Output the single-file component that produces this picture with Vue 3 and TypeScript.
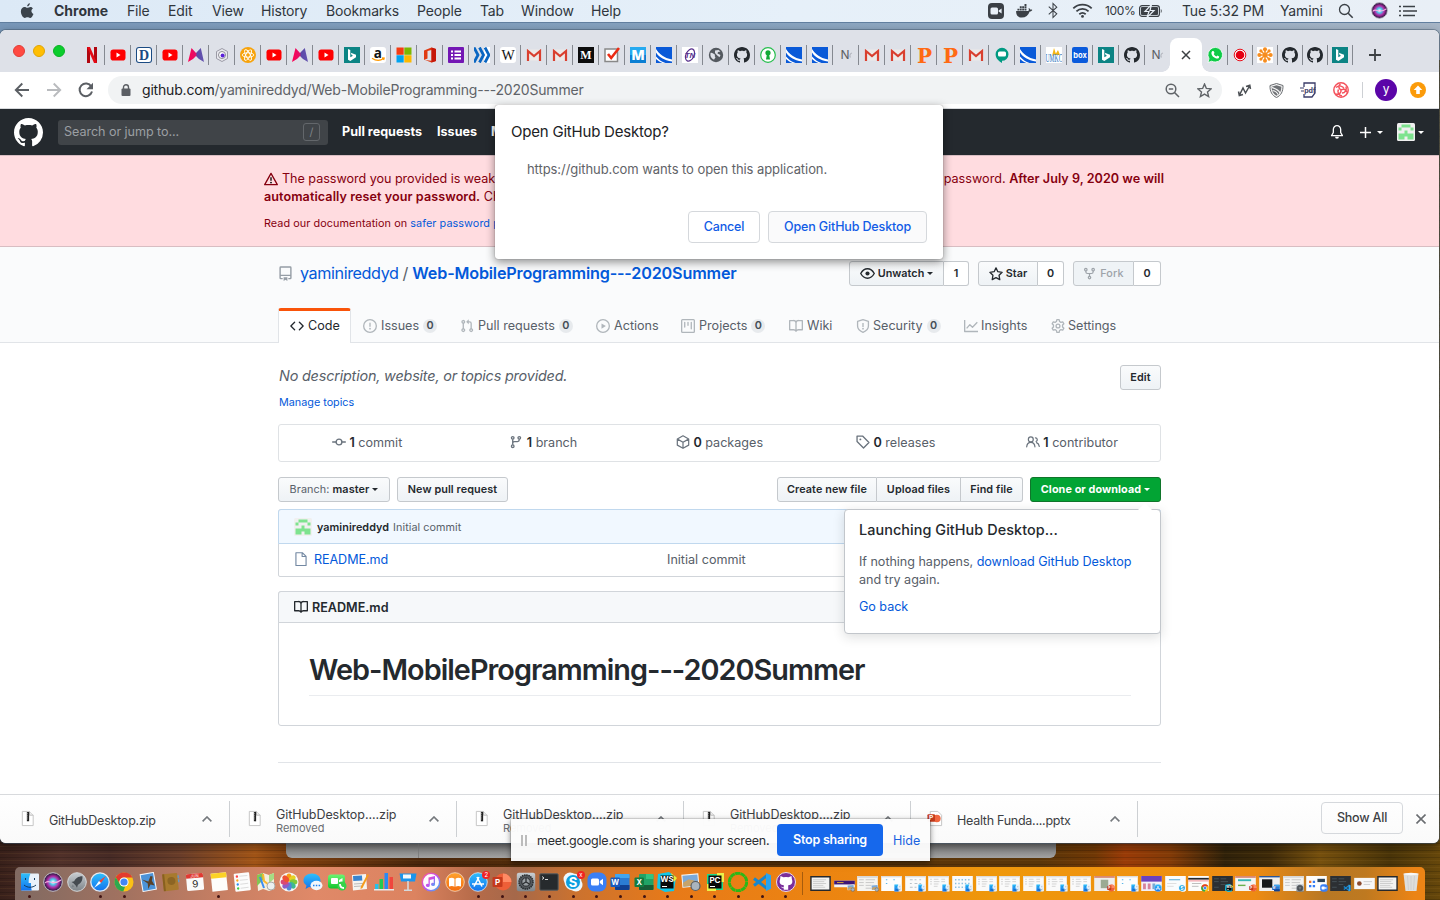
<script setup lang="ts">
const menus = ['Chrome', 'File', 'Edit', 'View', 'History', 'Bookmarks', 'People', 'Tab', 'Window', 'Help']

const leftTabs = [
  'netflix', 'yt', 'dict', 'yt', 'mural', 'hex', 'atom', 'yt', 'mural', 'yt', 'bing', 'amazon', 'ms', 'office',
  'forms', 'waves', 'wiki', 'gmail', 'gmail', 'medium', 'check', 'mblue', 'swoosh', 'tn', 'globe', 'gh', 'key',
  'swoosh', 'swoosh', 'nc', 'gmail', 'gmail', 'pp', 'pp', 'gmail', 'meet', 'swoosh', 'umkc', 'box', 'bing', 'gh', 'nc',
]
const rightTabs = ['whatsapp', 'record', 'flower', 'gh', 'gh', 'bing']

interface NavTab { id: string; icon: string; label: string; count?: number }
const navTabs: NavTab[] = [
  { id: 'code', icon: 'o-code', label: 'Code' },
  { id: 'issues', icon: 'o-issue', label: 'Issues', count: 0 },
  { id: 'pulls', icon: 'o-pr', label: 'Pull requests', count: 0 },
  { id: 'runs', icon: 'o-play', label: 'Actions' },
  { id: 'projects', icon: 'o-project', label: 'Projects', count: 0 },
  { id: 'wiki', icon: 'o-book', label: 'Wiki' },
  { id: 'security', icon: 'o-shield', label: 'Security', count: 0 },
  { id: 'insights', icon: 'o-graph', label: 'Insights' },
  { id: 'settings', icon: 'o-gear', label: 'Settings' },
]

const stats = [
  { icon: 'o-commit', n: 1, label: 'commit' },
  { icon: 'o-branch', n: 1, label: 'branch' },
  { icon: 'o-package', n: 0, label: 'packages' },
  { icon: 'o-tag', n: 0, label: 'releases' },
  { icon: 'o-people', n: 1, label: 'contributor' },
]

const downloads = [
  { icon: 'zip', name: 'GitHubDesktop.zip', note: '' },
  { icon: 'zip', name: 'GitHubDesktop....zip', note: 'Removed' },
  { icon: 'zip', name: 'GitHubDesktop....zip', note: 'Removed' },
  { icon: 'zip', name: 'GitHubDesktop....zip', note: 'Removed' },
  { icon: 'ppt', name: 'Health Funda....pptx', note: '' },
]

const apps = [
  'finder', 'siri', 'rocket', 'safari', 'chrome', 'mail', 'contacts', 'cal', 'notes', 'remind', 'maps', 'photos',
  'msg', 'facetime', 'pages', 'numbers', 'keynote', 'music', 'books', 'appstore', 'powerpoint', 'prefs', 'term',
  'skype', 'zoom', 'word', 'excel', 'ws', 'preview', 'pc', 'conda', 'vscode', 'ghd',
]
const running = new Set([
  'finder', 'safari', 'chrome', 'notes', 'appstore', 'powerpoint', 'prefs', 'term', 'skype', 'zoom', 'word', 'excel',
  'ws', 'preview', 'pc', 'conda', 'vscode', 'ghd',
])

interface Mini { body: string; badge: string }
const minis: Mini[] = [
  { body: 'm-frame', badge: '' }, { body: 'm-banner', badge: 'preview' }, { body: 'm-doc', badge: 'preview' },
  { body: 'm-few', badge: 'finder' }, { body: 'm-grid', badge: 'finder' }, { body: 'm-list', badge: 'finder' },
  { body: 'm-dots', badge: 'finder' }, { body: 'm-list', badge: 'finder' }, { body: 'm-list', badge: 'finder' },
  { body: 'm-list', badge: 'finder' }, { body: 'm-list', badge: 'finder' }, { body: 'm-list', badge: 'finder' },
  { body: 'm-photo', badge: 'powerpoint' }, { body: 'm-few', badge: 'finder' }, { body: 'm-store', badge: 'appstore' },
  { body: 'm-text', badge: 'skype' }, { body: 'm-web', badge: 'chrome' }, { body: 'm-dark', badge: 'ws' },
  { body: 'm-slides', badge: 'powerpoint' }, { body: 'm-black', badge: 'word' }, { body: 'm-doc', badge: 'prefs' },
  { body: 'm-zoom', badge: 'zoom' }, { body: 'm-dark', badge: 'vscode' }, { body: 'm-pic', badge: '' },
  { body: 'm-frame', badge: '' },
]
</script>

<template>
  <div class="desktop">
    <svg class="defs" width="0" height="0">
      <defs>
        <linearGradient id="gBlue" x1="0" y1="0" x2="0" y2="1"><stop offset="0" stop-color="#2fc0fb" /><stop offset="1" stop-color="#1372ee" /></linearGradient>
        <linearGradient id="gGrey" x1="0" y1="0" x2="0" y2="1"><stop offset="0" stop-color="#c9ced2" /><stop offset="1" stop-color="#7c8388" /></linearGradient>
        <linearGradient id="gGreen" x1="0" y1="0" x2="0" y2="1"><stop offset="0" stop-color="#6cf573" /><stop offset="1" stop-color="#12c52c" /></linearGradient>
        <linearGradient id="gOrange" x1="0" y1="0" x2="0" y2="1"><stop offset="0" stop-color="#ffa32e" /><stop offset="1" stop-color="#f56b0c" /></linearGradient>
        <linearGradient id="gMusic" x1="0" y1="0" x2="1" y2="1"><stop offset="0" stop-color="#fb5b89" /><stop offset=".5" stop-color="#c44df0" /><stop offset="1" stop-color="#36b6f5" /></linearGradient>
        <linearGradient id="gMural" x1="0" y1="0" x2="1" y2="0"><stop offset="0" stop-color="#ff0050" /><stop offset=".5" stop-color="#e0106b" /><stop offset=".55" stop-color="#5b4aa8" /><stop offset="1" stop-color="#6554b0" /></linearGradient>
        <radialGradient id="gSiri"><stop offset="0" stop-color="#fff" /><stop offset=".3" stop-color="#4dc9e8" /><stop offset=".6" stop-color="#b02ca8" /><stop offset="1" stop-color="#17142f" /></radialGradient>
      </defs>
    </svg>
    <svg class="sprites" width="0" height="0">
      <!-- GitHub glyphs, 16 unit grid -->
      <symbol id="gh" viewBox="0 0 16 16"><path d="M8 0C3.58 0 0 3.58 0 8c0 3.54 2.29 6.53 5.47 7.59.4.07.55-.17.55-.38 0-.19-.01-.82-.01-1.49-2.01.37-2.53-.49-2.69-.94-.09-.23-.48-.94-.82-1.13-.28-.15-.68-.52-.01-.53.63-.01 1.08.58 1.23.82.72 1.21 1.87.87 2.33.66.07-.52.28-.87.51-1.07-1.78-.2-3.64-.89-3.64-3.95 0-.87.31-1.59.82-2.15-.08-.2-.36-1.02.08-2.12 0 0 .67-.21 2.2.82.64-.18 1.32-.27 2-.27.68 0 1.36.09 2 .27 1.53-1.04 2.2-.82 2.2-.82.44 1.1.16 1.92.08 2.12.51.56.82 1.27.82 2.15 0 3.07-1.87 3.75-3.65 3.95.29.25.54.73.54 1.48 0 1.07-.01 1.93-.01 2.2 0 .21.15.46.55.38A8.013 8.013 0 0016 8c0-4.42-3.58-8-8-8z" /></symbol>
      <symbol id="o-repo" viewBox="0 0 16 16"><path fill-rule="evenodd" d="M1.500 1.750A1.500 1.500 0 013 .25h10a1.500 1.500 0 011.500 1.500v11a1.500 1.500 0 01-1.500 1.500h-2v-1.500h2v-2H3v2h2v1.500H3a1.500 1.500 0 01-1.500-1.500zM3 1.750v7.500h10v-7.500zM6 12h4v3.900l-2-1.300-2 1.300z" /></symbol>
      <symbol id="o-code" viewBox="0 0 16 16"><path d="M4.720 3.220a.75.75 0 011.060 1.060L2.060 8l3.720 3.720a.75.75 0 11-1.060 1.060L.47 8.530a.75.75 0 010-1.060l4.250-4.250zm6.560 0a.75.75 0 10-1.060 1.060L13.940 8l-3.720 3.720a.75.75 0 101.060 1.060l4.250-4.250a.75.75 0 000-1.060l-4.250-4.250z" /></symbol>
      <symbol id="o-issue" viewBox="0 0 16 16"><path fill-rule="evenodd" d="M8 1.500a6.500 6.500 0 100 13 6.500 6.500 0 000-13zM0 8a8 8 0 1116 0A8 8 0 010 8zm9 3a1 1 0 11-2 0 1 1 0 012 0zm-.25-6.250a.75.75 0 00-1.500 0v3.500a.75.75 0 001.500 0v-3.500z" /></symbol>
      <symbol id="o-pr" viewBox="0 0 16 16"><path fill-rule="evenodd" d="M7.177 3.073L9.573.677A.25.25 0 0110 .854v4.792a.25.25 0 01-.427.177L7.177 3.427a.25.25 0 010-.354zM3.750 2.500a.75.75 0 100 1.500.75.75 0 000-1.500zm-2.250.75a2.250 2.250 0 113 2.122v5.256a2.251 2.251 0 11-1.500 0V5.372A2.250 2.250 0 011.500 3.250zM11 2.500h-1V4h1a1 1 0 011 1v5.628a2.251 2.251 0 101.500 0V5A2.500 2.500 0 0011 2.500zm1 10.250a.75.75 0 111.500 0 .75.75 0 01-1.500 0zM3.750 12a.75.75 0 100 1.500.75.75 0 000-1.500z" /></symbol>
      <symbol id="o-play" viewBox="0 0 16 16"><circle cx="8" cy="8" r="7.250" fill="none" stroke="currentColor" stroke-width="1.500" /><path d="M6.300 5v6l5-3z" /></symbol>
      <symbol id="o-project" viewBox="0 0 16 16"><rect x=".75" y=".75" width="14.500" height="14.500" rx="1" fill="none" stroke="currentColor" stroke-width="1.500" /><path fill="none" stroke="currentColor" stroke-width="1.500" stroke-linecap="round" d="M4.250 3.750v5.500M8 3.750v3.500M11.750 3.750v7.500" /></symbol>
      <symbol id="o-book" viewBox="0 0 16 16"><path fill="none" stroke="currentColor" stroke-width="1.500" stroke-linejoin="round" d="M8 14.200V4M.75 1.750H5A3 3 0 018 4a3 3 0 013-2.250h4.250v10.500h-4.500C9.500 12.250 8.500 13 8 14c-.5-1-1.500-1.750-2.750-1.750H.75z" /></symbol>
      <symbol id="o-shield" viewBox="0 0 16 16"><path fill="none" stroke="currentColor" stroke-width="1.500" stroke-linejoin="round" d="M8 .8l6.200 2v5.300c0 3.200-2.300 5.600-6.200 7.100-3.900-1.500-6.200-3.900-6.200-7.100V2.800z" /><path d="M7.250 4.500h1.500V9h-1.500z" /><circle cx="8" cy="11" r="1" /></symbol>
      <symbol id="o-graph" viewBox="0 0 16 16"><path fill="none" stroke="currentColor" stroke-width="1.500" stroke-linejoin="round" d="M.75 1v13.250H16M3 10.700l3.700-4.200 3 2.900 5.500-5.600" /></symbol>
      <symbol id="o-gear" viewBox="0 0 16 16"><path fill="none" stroke="currentColor" stroke-width="1.500" stroke-linejoin="round" d="M6.700.8h2.600l.5 2.100 1.500.9 2.100-.6 1.300 2.200-1.500 1.500v2.200l1.500 1.500-1.300 2.200-2.100-.6-1.500.9-.5 2.100H6.700l-.5-2.100-1.500-.9-2.100.6-1.300-2.200 1.500-1.500V6.900L1.300 5.400l1.300-2.200 2.100.6 1.500-.9z" /><circle cx="8" cy="8" r="2.200" fill="none" stroke="currentColor" stroke-width="1.500" /></symbol>
      <symbol id="o-commit" viewBox="0 0 16 16"><path fill="none" stroke="currentColor" stroke-width="1.500" stroke-linecap="round" d="M.75 8h3.500M11.750 8h3.500" /><circle cx="8" cy="8" r="3.300" fill="none" stroke="currentColor" stroke-width="1.600" /></symbol>
      <symbol id="o-branch" viewBox="0 0 16 16"><g fill="none" stroke="currentColor" stroke-width="1.500"><circle cx="4.250" cy="3.250" r="1.500" /><circle cx="4.250" cy="12.750" r="1.500" /><circle cx="11.750" cy="3.250" r="1.500" /><path d="M4.250 4.800v6.400M11.750 4.800v.7c0 1.300-.7 2-2 2h-3.500c-1.300 0-2 .8-2 2" /></g></symbol>
      <symbol id="o-fork" viewBox="0 0 16 16"><g fill="none" stroke="currentColor" stroke-width="1.500"><circle cx="3.500" cy="3.250" r="1.500" /><circle cx="12.500" cy="3.250" r="1.500" /><circle cx="8" cy="13" r="1.500" /><path d="M3.500 4.800v1c0 1.500.8 2.200 2.200 2.200h4.600c1.400 0 2.200-.7 2.200-2.200v-1M8 8v3.400" /></g></symbol>
      <symbol id="o-package" viewBox="0 0 16 16"><path fill="none" stroke="currentColor" stroke-width="1.400" stroke-linejoin="round" d="M8 .9l6.500 3.600v7.100L8 15.200l-6.500-3.600V4.500zM1.700 4.700L8 8.200l6.300-3.500M8 8.200v7" /></symbol>
      <symbol id="o-tag" viewBox="0 0 16 16"><path fill="none" stroke="currentColor" stroke-width="1.500" stroke-linejoin="round" d="M1.200 1.200h6.300l7.300 7.300-6.200 6.300-7.400-7.300z" /><circle cx="5" cy="5" r="1.100" /></symbol>
      <symbol id="o-people" viewBox="0 0 16 16"><g fill="none" stroke="currentColor" stroke-width="1.400" stroke-linecap="round"><circle cx="5.500" cy="5" r="2.800" /><path d="M.8 13.500c.3-3.300 2.200-5 4.700-5s4.400 1.700 4.700 5M10.800 3.200a2.200 2.200 0 01.8 4.200M12 8.800c1.800.6 2.900 2.200 3.200 4.200" /></g></symbol>
      <symbol id="o-file" viewBox="0 0 16 16"><path fill="none" stroke="currentColor" stroke-width="1.300" stroke-linejoin="round" d="M2.200.8h7.300l4.300 4.300v10.300H2.200zM9.300.8v4.400h4.400" /></symbol>
      <symbol id="o-eye" viewBox="0 0 16 16"><path fill="none" stroke="currentColor" stroke-width="1.500" d="M.8 8C2.500 5 5 3 8 3s5.500 2 7.200 5c-1.700 3-4.200 5-7.200 5S2.500 11 .8 8z" /><circle cx="8" cy="8" r="2.200" /></symbol>
      <symbol id="o-star" viewBox="0 0 16 16"><path fill="none" stroke="currentColor" stroke-width="1.500" stroke-linejoin="round" d="M8 1l2.100 4.400 4.900.7-3.500 3.400.8 4.900L8 12.100l-4.300 2.300.8-4.900L1 6.100l4.900-.7z" /></symbol>
      <symbol id="o-alert" viewBox="0 0 16 16"><path fill="none" stroke="currentColor" stroke-width="1.500" stroke-linejoin="round" d="M8 1.500l7.200 13H.8z" /><path d="M7.250 6h1.500v4h-1.500z" /><circle cx="8" cy="12" r="1" /></symbol>
      <symbol id="o-bell" viewBox="0 0 16 16"><path fill="none" stroke="currentColor" stroke-width="1.500" stroke-linejoin="round" d="M8 .8a4.200 4.200 0 014.200 4.200v3.500l2 3.700H1.800l2-3.700V5A4.200 4.200 0 018 .8z" /><path d="M5.800 13.500h4.400a2.200 2.200 0 01-4.400 0z" /></symbol>
      <symbol id="identicon" viewBox="0 0 12 12"><rect width="12" height="12" rx="1" fill="#f0f0f0" /><path fill="#7ee38f" d="M3 1h6v2H3zM1 3h2v2H1zM9 3h2v2H9zM5 5h2v2H5zM1 7h10v2H1zM1 9h4v2H1zM7 9h4v2H7z" /></symbol>

      <!-- tab favicons -->
      <symbol id="netflix" viewBox="0 0 16 16"><path fill="#b1060f" d="M3 0h3v16H3zM10 0h3v16h-3z" /><path fill="#e50914" d="M3 0h3l7 16h-3z" /></symbol>
      <symbol id="yt" viewBox="0 0 16 16"><rect x=".5" y="2.500" width="15" height="11" rx="2.800" fill="#f00" /><path d="M6.500 5.600v4.800l4-2.400z" fill="#fff" /></symbol>
      <symbol id="dict" viewBox="0 0 16 16"><rect x="0" y="0" width="16" height="16" rx="3" fill="#1b4b83" /><rect x="1" y="1" width="14" height="14" rx="2" fill="#fff" /><text x="8" y="13" font-size="14" font-weight="700" text-anchor="middle" font-family="Liberation Serif, serif" fill="#1b4b83">D</text></symbol>
      <symbol id="mural" viewBox="0 0 16 16"><path fill="url(#gMural)" d="M3.500 1L8 6l4.800-5L16 15l-5-3-3-3-3 3-5 3z" /></symbol>
      <symbol id="hex" viewBox="0 0 16 16"><path fill="#e8e8ee" stroke="#9a9aa5" d="M8 1.500l5.500 3v7l-5.500 3-5.500-3v-7z" /><circle cx="8" cy="8" r="3.500" fill="#fff" stroke="#8a8a94" /><circle cx="8.600" cy="8.600" r="2" fill="#5a21d8" /></symbol>
      <symbol id="atom" viewBox="0 0 16 16"><circle cx="8" cy="8" r="8" fill="#f7a30b" /><g fill="none" stroke="#fff" stroke-width=".9"><ellipse cx="8" cy="8" rx="5.800" ry="2.200" /><ellipse cx="8" cy="8" rx="5.800" ry="2.200" transform="rotate(60 8 8)" /><ellipse cx="8" cy="8" rx="5.800" ry="2.200" transform="rotate(120 8 8)" /></g></symbol>
      <symbol id="bing" viewBox="0 0 16 16"><path fill="#0c8484" d="M0 0h16v16H0z" /><path fill="#fff" d="M4 2l2.300.9v7.300l2.700-1.500-1.400-.7-.8-2.300 5.200 2v2.600L6.300 14 4 12.700z" /></symbol>
      <symbol id="amazon" viewBox="0 0 16 16"><rect width="16" height="16" rx="3" fill="#fff" /><text x="7.800" y="10.500" font-size="13.500" font-weight="700" text-anchor="middle" font-family="Open Sans, sans-serif" fill="#111">a</text><path d="M2 11.200c4 2.800 8 2.800 11.600.4M12 10.800l2.200.2-.6 2" fill="none" stroke="#f90" stroke-width="1.200" /></symbol>
      <symbol id="ms" viewBox="0 0 16 16"><path fill="#f53b12" d="M.5.5h7.200v7.200H.5z" /><path fill="#7db700" d="M8.300.5h7.200v7.200H8.300z" /><path fill="#00a3f0" d="M.5 8.300h7.200v7.200H.5z" /><path fill="#fdb900" d="M8.300 8.300h7.200v7.200H8.300z" /></symbol>
      <symbol id="office" viewBox="0 0 16 16"><path fill="#e03a12" d="M9.500.5L14 2v12l-4.500 1.500L3 13l6.500.8V3L5.500 4v7.500L2 13V3.500z" /><path fill="#c5170a" d="M9.500.5L14 2v12l-4.500 1.500z" /></symbol>
      <symbol id="forms" viewBox="0 0 16 16"><rect width="16" height="16" rx="1" fill="#7316b4" /><path stroke="#fff" stroke-width="2" d="M3 4.500h2M6.500 4.500H13M3 8h2M6.500 8H13M3 11.500h2M6.500 11.500H13" /></symbol>
      <symbol id="waves" viewBox="0 0 16 16"><path fill="#fff" d="M10 0h6v16h-6z" /><path fill="none" stroke="#0a66c2" stroke-width="2.800" d="M0 .5L4 8 0 15.500M5.500.5L9.500 8l-4 7.500M11 .5L15 8l-4 7.500" /></symbol>
      <symbol id="wiki" viewBox="0 0 16 16"><rect width="16" height="16" rx="3" fill="#fff" /><text x="8" y="12.800" font-size="14" text-anchor="middle" font-family="Liberation Serif, serif" fill="#111">W</text></symbol>
      <symbol id="gmail" viewBox="0 0 16 16"><path fill="#eceae8" d="M1 2.500h14v11H1z" /><path fill="none" stroke="#d9402f" stroke-width="2.200" d="M2 14V4l6 5 6-5v10" /></symbol>
      <symbol id="medium" viewBox="0 0 16 16"><path d="M0 0h16v16H0z" fill="#0c0c0c" /><text x="8" y="12" font-size="12" font-weight="700" text-anchor="middle" font-family="Liberation Serif, serif" fill="#fff">M</text></symbol>
      <symbol id="check" viewBox="0 0 16 16"><path d="M1 2h12.500v12.500H1z" fill="#fff" stroke="#888" stroke-width="1.500" /><path fill="none" stroke="#ec2b13" stroke-width="2.600" d="M4 7l3.200 4L15 1" /></symbol>
      <symbol id="mblue" viewBox="0 0 16 16"><path d="M0 0h16v16H0z" fill="#0b7fd3" /><path d="M0 0h16v8H0z" fill="#26aaf0" /><text x="8" y="13.200" font-size="14" font-weight="800" text-anchor="middle" font-family="Open Sans, sans-serif" fill="#fff">M</text></symbol>
      <symbol id="swoosh" viewBox="0 0 16 16"><path d="M0 0h16v16H0z" fill="#0a5ad8" /><path d="M0 2c3 5 8 9 16 10.500v2C8 13.300 3 10 0 5.500z" fill="#fff" /><path d="M0 9.500c3 3.500 6 5.500 9.500 6.500H6.500C4 15 1.500 13.500 0 12z" fill="#fff" /></symbol>
      <symbol id="tn" viewBox="0 0 16 16"><path d="M0 0h16v16H0z" fill="#fff" /><ellipse cx="8" cy="8" rx="4" ry="6.500" transform="rotate(25 8 8)" fill="none" stroke="#57308c" stroke-width="1.200" /><text x="8" y="11" font-size="8" font-weight="700" font-style="italic" text-anchor="middle" font-family="Liberation Sans, sans-serif" fill="#57308c">TN</text></symbol>
      <symbol id="globe" viewBox="0 0 16 16"><circle cx="8" cy="8" r="7.200" fill="#555a60" /><path fill="#dee1e8" d="M2.500 6c1.500-.5 2.500.6 4 1.200 1.200.8-.5 1.800 1 3L6 12.800C3 11.500 2 9 2.500 6zM7 3.500l3.500-.5 2 1.500-2.500.5-.5 1.500 3 1.500-1 2.200-2.500-2L7 6z" /></symbol>
      <symbol id="key" viewBox="0 0 16 16"><circle cx="8" cy="8" r="7.300" fill="#fff" stroke="#25be4c" stroke-width="1.200" /><circle cx="8" cy="5.800" r="2.600" fill="#12aa37" /><path fill="#12aa37" d="M7 7h2l1 5.500H6z" /></symbol>
      <symbol id="nc" viewBox="0 0 16 16"><text x="2.500" y="12" font-size="12" font-family="Inter, sans-serif" fill="#5c5f65">N</text><path d="M14 6a2.800 2.800 0 00-1.500 4.500" fill="none" stroke="#b5b8c0" stroke-width="1.200" /></symbol>
      <symbol id="pp" viewBox="0 0 16 16"><text x="8.500" y="15.500" font-size="20" font-weight="700" text-anchor="middle" font-family="DejaVu Serif, serif" fill="#ff6a13">P</text></symbol>
      <symbol id="meet" viewBox="0 0 16 16"><path fill="#009a82" d="M8 .8a6.400 6.400 0 110 13v2.200C5 14 1.600 11.500 1.600 7.200A6.400 6.400 0 018 .8z" /><rect x="4" y="4.500" width="8" height="5" rx="1.500" fill="#fff" /></symbol>
      <symbol id="umkc" viewBox="0 0 16 16"><path d="M0 0h16v16H0z" fill="#fff" /><path fill="#f6b511" d="M8 1l2 6-4 2zM12 3l2 5H9z" /><g transform="scale(.42 1)"><text x="19" y="15" font-size="13.500" text-anchor="middle" font-family="Liberation Serif, serif" fill="#2672bd">UMKC</text></g></symbol>
      <symbol id="box" viewBox="0 0 16 16"><rect width="16" height="16" rx="2" fill="#0b5bdc" /><text x="8" y="10.800" font-size="7.500" font-weight="700" text-anchor="middle" font-family="Inter, sans-serif" fill="#fff">box</text></symbol>
      <symbol id="whatsapp" viewBox="0 0 16 16"><path d="M1 15.500l1-4A7.300 7.300 0 118.200 15c-1.300 0-2.500-.3-3.500-.8z" fill="#0fcb47" stroke="#fff" stroke-width=".8" /><path fill="#fff" d="M5.600 4l1.200.2.700 1.800-.8 1c.7 1.200 1.500 1.900 2.700 2.400l1-1 1.800 1c0 1.800-1.500 2.500-3 2.100C6.500 10.700 4.600 8.500 4.400 6.300c0-1.100.5-1.900 1.200-2.300z" /></symbol>
      <symbol id="record" viewBox="0 0 16 16"><circle cx="8" cy="8" r="5.800" fill="#fff" stroke="#e8111b" stroke-width="1" /><circle cx="8" cy="8" r="4.300" fill="#e50012" /></symbol>
      <symbol id="flower" viewBox="0 0 16 16"><path d="M0 0h16v16H0z" fill="#fff" /><g stroke="#f68d1f" stroke-width="1.600"><path d="M8 2v12M2 8h12M3.800 3.800l8.400 8.400M12.200 3.800l-8.400 8.400" /></g><g fill="#f68d1f"><circle cx="8" cy="2.300" r="2" /><circle cx="8" cy="13.700" r="2" /><circle cx="2.300" cy="8" r="2" /><circle cx="13.700" cy="8" r="2" /><circle cx="3.900" cy="3.900" r="1.600" /><circle cx="12.100" cy="3.900" r="1.600" /><circle cx="3.900" cy="12.100" r="1.600" /><circle cx="12.100" cy="12.100" r="1.600" /></g></symbol>

      <!-- download glyphs -->
      <symbol id="zip" viewBox="0 0 14 18"><path d="M1 1.500h7.500l4 4V16.500H1z" fill="#fff" stroke="#c4c4c4" /><path d="M8.500 1.500v4h4" fill="#eee" stroke="#bbb" /><path d="M7 2v10" stroke="#222" stroke-width="2.400" /><path d="M6.500 3v8" stroke="#999" stroke-width="1" stroke-dasharray="1 1" /></symbol>
      <symbol id="ppt" viewBox="0 0 16 18"><path d="M3 1.500h8l4 4V16.500H3z" fill="#fff" stroke="#c4c4c4" /><circle cx="10" cy="9" r="4" fill="#f0663f" /><rect y="4.500" width="8" height="8" rx="1" fill="#c63a1b" /><text x="4" y="11" font-size="7" font-weight="700" text-anchor="middle" font-family="Inter, sans-serif" fill="#fff">P</text></symbol>

      <!-- dock applications, 20 unit grid -->
      <symbol id="finder" viewBox="0 0 20 20"><rect x="1" y="1.500" width="18" height="17" rx="1" fill="#e8f1fa" /><path fill="url(#gBlue)" d="M1 1.500h9.500C9 5 8.500 8 8.700 11H11c0 3 .2 5 .7 7.500H1z" /><path fill="none" stroke="#123a5e" d="M5.500 6v2M14.500 6v2M4 13c3.500 3 8.500 3 12 0" /></symbol>
      <symbol id="siri" viewBox="0 0 20 20"><circle cx="10" cy="10" r="9.300" fill="url(#gSiri)" stroke="#c5c0cc" /><path d="M2 11c4-5 7 4 16-3" fill="none" stroke="#f6b3e4" stroke-width="1.200" /></symbol>
      <symbol id="rocket" viewBox="0 0 20 20"><circle cx="10" cy="10" r="9.300" fill="url(#gGrey)" stroke="#d5d8da" /><path fill="#454b51" d="M15.500 4.200c-4.500 0-7 2.300-8.300 5L4.500 10l2 1.200 2.200 2.200L10 15.800l.9-3c2.700-1.300 4.900-4 4.600-8.600z" /><path fill="#7b8288" d="M5.500 12.500l2 2-3 1z" /></symbol>
      <symbol id="safari" viewBox="0 0 20 20"><circle cx="10" cy="10" r="9.200" fill="url(#gBlue)" stroke="#e5e9ee" stroke-width="1.300" /><path fill="#f04438" d="M16 4L11 11 9 9z" /><path fill="#fff" d="M4 16L11 11 9 9z" /></symbol>
      <symbol id="chrome" viewBox="0 0 20 20"><circle cx="10" cy="10" r="9.500" fill="#fbc116" /><path fill="#e33b2e" d="M1.800 5.200a9.500 9.500 0 0116.600.3H10a4.500 4.500 0 00-4 6.700z" /><path fill="#2da94f" d="M1.800 5.200L6 12.300a4.500 4.500 0 005.200 2L9.300 19.500A9.500 9.500 0 011.800 5.200z" /><circle cx="10" cy="10" r="4.600" fill="#fff" /><circle cx="10" cy="10" r="3.600" fill="#4286f5" /></symbol>
      <symbol id="mail" viewBox="0 0 20 20"><g transform="rotate(-10 10 10)"><path d="M3 1h14.500v18H3z" fill="#f4f7fb" /><path d="M4 2h12.500v16H4z" fill="#4c93d8" /><path d="M4.500 6.500l6 3 3-5 2 1-1.500 4 2 5-4-1.500-3 4 .5-5.500z" fill="#5a4128" /></g></symbol>
      <symbol id="contacts" viewBox="0 0 20 20"><g transform="rotate(-6 10 10)"><rect x="2" y="1.500" width="15" height="17" rx="1" fill="#a87a2e" /><rect x="2" y="1.500" width="2" height="17" fill="#88601f" /><circle cx="10.500" cy="9" r="4" fill="#8c6524" /><path d="M17 4h1.500v3H17zM17 8h1.500v3H17z" fill="#69b" /></g></symbol>
      <symbol id="cal" viewBox="0 0 20 20"><g transform="rotate(-5 10 10)"><rect x="1.500" y="1.500" width="17" height="17" rx="1.500" fill="#fafafa" /><path d="M1.500 3q0-1.500 1.500-1.500h14q1.500 0 1.500 1.500v3h-17z" fill="#e03a32" /><text x="10" y="5.300" font-size="4" text-anchor="middle" font-family="Inter, sans-serif" fill="#fff">JUN</text><text x="10" y="15.500" font-size="10" text-anchor="middle" font-family="Inter, sans-serif" fill="#222">9</text></g></symbol>
      <symbol id="notes" viewBox="0 0 20 20"><g transform="rotate(-6 10 10)"><path d="M2.500 1h15.500v18H2.500z" fill="#fdfdfb" /><path d="M2.500 1h15.500v5H2.500z" fill="#fcd227" /></g></symbol>
      <symbol id="remind" viewBox="0 0 20 20"><g transform="rotate(-6 10 10)"><rect x="2.500" y="1" width="15.500" height="18" rx="1" fill="#fcfcfc" /><circle cx="5.500" cy="4" r="1.200" fill="#f44" /><circle cx="5.500" cy="8" r="1.200" fill="#fa2" /><circle cx="5.500" cy="12" r="1.200" fill="#2b8cf5" /><circle cx="5.500" cy="16" r="1.200" fill="#4c4" /><path d="M8 4h8M8 8h8M8 12h8M8 16h8" stroke="#ddd" /></g></symbol>
      <symbol id="maps" viewBox="0 0 20 20"><path d="M1 3l6-2 6 2 5-2v16l-5 2-6-2-5 2z" fill="#f3eedd" /><path d="M1 3l6-2v7L1 14z" fill="#84c552" /><path d="M13 3l5-2v6l-5 4z" fill="#a7db84" /><path d="M7 2l1 7 5 4" stroke="#f9b82f" stroke-width="2" fill="none" /><path d="M4 5l4 11" stroke="#3b8df2" stroke-width="2" /><circle cx="15" cy="14" r="4" fill="#eceff1" stroke="#aaa" /></symbol>
      <symbol id="photos" viewBox="0 0 20 20"><circle cx="10" cy="10" r="9.500" fill="#f7f7f5" /><g opacity=".95"><ellipse cx="10" cy="5.500" rx="2.700" ry="3.900" fill="#f99a0b" /><ellipse cx="10" cy="5.500" rx="2.700" ry="3.900" fill="#e5cf1a" transform="rotate(45 10 10)" /><ellipse cx="10" cy="5.500" rx="2.700" ry="3.900" fill="#7cc62f" transform="rotate(90 10 10)" /><ellipse cx="10" cy="5.500" rx="2.700" ry="3.900" fill="#35b78b" transform="rotate(135 10 10)" /><ellipse cx="10" cy="5.500" rx="2.700" ry="3.900" fill="#4a7fd6" transform="rotate(180 10 10)" /><ellipse cx="10" cy="5.500" rx="2.700" ry="3.900" fill="#8a54c4" transform="rotate(225 10 10)" /><ellipse cx="10" cy="5.500" rx="2.700" ry="3.900" fill="#d9406f" transform="rotate(270 10 10)" /><ellipse cx="10" cy="5.500" rx="2.700" ry="3.900" fill="#ef4a2a" transform="rotate(315 10 10)" /></g></symbol>
      <symbol id="msg" viewBox="0 0 20 20"><path d="M9 1.500c5 0 8.500 3 8.500 7s-3.500 7-8.500 7c-1 0-2-.1-3-.4L2.500 17l1-3.500C1.500 12 .5 10.500.5 8.500c0-4 3.500-7 8.500-7z" fill="url(#gBlue)" /><ellipse cx="13.500" cy="13.500" rx="6" ry="4.700" fill="#f2f7fc" /><path d="M10 13.500h1.500M12.800 13.500h1.500M15.600 13.500h1.500" stroke="#1a7ff0" stroke-width="1.500" /></symbol>
      <symbol id="facetime" viewBox="0 0 20 20"><rect x="1" y="2.500" width="17" height="14" rx="3" fill="url(#gGreen)" /><rect x="4" y="6" width="7" height="6" rx="1" fill="#fff" /><path d="M12 8l3.500-2v6L12 10z" fill="#fff" /><circle cx="15" cy="14" r="4.500" fill="#35d24a" /><path d="M13 12c0 2.500 1.500 4 4 4" stroke="#fff" stroke-width="1.800" fill="none" /></symbol>
      <symbol id="pages" viewBox="0 0 20 20"><path d="M2 3l14-1 1 15-14 1.500z" fill="#f6f4f0" /><path d="M3 4l9-.5.3 5L3.300 9z" fill="#3984cf" /><path d="M4 12l9-.6M4 14.500l9-.6" stroke="#bbb" /><path d="M17.500 2l1.500 1-6.500 13-2 1 .3-2.300z" fill="#f59b1c" /></symbol>
      <symbol id="numbers" viewBox="0 0 20 20"><path d="M0 17h20v1.500H0z" fill="#e8e8e8" /><path d="M1 12h3.500v5H1z" fill="#26c0e8" /><path d="M5.500 7H9v10H5.500z" fill="#23cb53" /><path d="M10.500 1H14v16h-3.500z" fill="#2a8af5" /><path d="M15.500 5H19v12h-3.500z" fill="#f0463d" /></symbol>
      <symbol id="keynote" viewBox="0 0 20 20"><path d="M1.500 1.500h17l-1.500 8H3z" fill="#1b95ec" /><path d="M5 2.500h8v4H5z" fill="#f5f8fa" /><path d="M9.200 9h1.600v8.500H9.200zM6 17.500h8V19H6z" fill="#d5d9dc" /></symbol>
      <symbol id="music" viewBox="0 0 20 20"><circle cx="10" cy="10" r="8.700" fill="#fdfbfd" stroke="url(#gMusic)" stroke-width="1.500" /><path fill="url(#gMusic)" d="M7.500 5.500l6.500-1.500v8.500a2 1.600 0 11-1.300-1.600V7L8.800 8v5.600a2 1.600 0 11-1.300-1.600z" /></symbol>
      <symbol id="books" viewBox="0 0 20 20"><circle cx="10" cy="10" r="9.300" fill="url(#gOrange)" stroke="#f7dfc7" stroke-width=".8" /><path d="M4 6.300c2-.8 4-.8 5.500.4v8C8 13.700 6 13.700 4 14.500zM16 6.300c-2-.8-4-.8-5.500.4v8c1.500-1 3.500-1 5.500-.2z" fill="#fff" /></symbol>
      <symbol id="appstore" viewBox="0 0 20 20"><circle cx="10" cy="10" r="9.300" fill="url(#gBlue)" stroke="#dcecfa" stroke-width=".8" /><path d="M6 14.500L11 5M9 5l5 9.500M4 12h12" stroke="#fff" stroke-width="1.600" /></symbol>
      <symbol id="powerpoint" viewBox="0 0 20 20"><circle cx="11" cy="10" r="8.500" fill="#ee5f38" /><path d="M11 1.500a8.500 8.500 0 018.500 8.500H11z" fill="#ff8a64" /><rect x=".5" y="5" width="10" height="10" rx="1" fill="#c5391c" /><text x="5.500" y="13" font-size="8" font-weight="700" text-anchor="middle" font-family="Inter, sans-serif" fill="#fff">P</text></symbol>
      <symbol id="prefs" viewBox="0 0 20 20"><rect x=".8" y=".8" width="18.400" height="18.400" rx="2" fill="url(#gGrey)" /><circle cx="10" cy="10" r="7" fill="#53585d" stroke="#25292c" stroke-width="1.500" stroke-dasharray="1.500 .7" /><circle cx="10" cy="10" r="4.200" fill="#999fa3" stroke="#2a2d30" /><path d="M10 10V6M10 10l3.500 2M10 10l-3.500 2" stroke="#2a2d30" stroke-width="1.300" /></symbol>
      <symbol id="term" viewBox="0 0 20 20"><rect x=".8" y="1.800" width="18.400" height="16.400" rx="1" fill="#262a2d" stroke="#595d60" /><path d="M3 4.500l2 1.500-2 1.500M6 7.500h3" stroke="#eee" stroke-width=".9" fill="none" /></symbol>
      <symbol id="skype" viewBox="0 0 20 20"><circle cx="7" cy="7" r="6.500" fill="#eef8fd" /><circle cx="13" cy="13" r="6.500" fill="#eef8fd" /><circle cx="10" cy="10" r="8.500" fill="#e9f5fc" /><circle cx="10" cy="10" r="7" fill="#0b9fe0" /><text x="10" y="14.800" font-size="13" font-weight="700" text-anchor="middle" font-family="Inter, sans-serif" fill="#fff">S</text></symbol>
      <symbol id="zoom" viewBox="0 0 20 20"><rect x=".5" y=".5" width="19" height="19" rx="7" fill="#3a7ff4" /><rect x="4" y="6.500" width="8" height="7" rx="1.500" fill="#fff" /><path d="M12.800 9l3.200-2.200v6.400L12.800 11z" fill="#fff" /></symbol>
      <symbol id="word" viewBox="0 0 20 20"><rect x="5" y="2" width="14.500" height="16" rx="1" fill="#2b7cd3" /><path d="M5 3q0-1 1-1h12.500q1 0 1 1v3H5z" fill="#41a5ee" /><path d="M5 13h14.500v4q0 1-1 1H6q-1 0-1-1z" fill="#103f91" /><rect x=".5" y="5.500" width="9.500" height="9.500" rx="1" fill="#185abd" /><text x="5.200" y="12.800" font-size="7.500" font-weight="700" text-anchor="middle" font-family="Inter, sans-serif" fill="#fff">W</text></symbol>
      <symbol id="excel" viewBox="0 0 20 20"><rect x="5" y="2" width="14.500" height="16" rx="1" fill="#21a366" /><path d="M12 2h6.500q1 0 1 1v4H12z" fill="#33c481" /><path d="M5 13h14.500v4q0 1-1 1H6q-1 0-1-1z" fill="#185c37" /><rect x=".5" y="5.500" width="9.500" height="9.500" rx="1" fill="#107c41" /><text x="5.200" y="12.800" font-size="7.500" font-weight="700" text-anchor="middle" font-family="Inter, sans-serif" fill="#fff">X</text></symbol>
      <symbol id="ws" viewBox="0 0 20 20"><path d="M1 2L12 0l7 5-2 14-9 1L0 16z" fill="#12c7ea" /><path d="M14 1l6 5-3 4z" fill="#e9ef32" /><path d="M3.500 3.500h13v13h-13z" fill="#0a0a0a" /><text x="10" y="10.300" font-size="8" font-weight="700" text-anchor="middle" font-family="Inter, sans-serif" fill="#fff">WS</text><path d="M5 14h5v1H5z" fill="#fff" /></symbol>
      <symbol id="preview" viewBox="0 0 20 20"><g transform="rotate(-5 10 10)"><path d="M1 2h17v13H1z" fill="#f5f5f3" /><path d="M2 3h15v11H2z" fill="#7ba9d9" /><path d="M2 10l6-3 9 3v4H2z" fill="#c6a36b" /></g><circle cx="14.500" cy="14" r="4.500" fill="#aab4bd" stroke="#565d63" stroke-width="1.200" /></symbol>
      <symbol id="pc" viewBox="0 0 20 20"><path d="M2 2h16v16H2z" fill="#21d789" /><path d="M12 1h7v9h-7zM2 12h9v7H2z" fill="#eaf24a" /><path d="M3.500 3.500h13v13h-13z" fill="#0a0a0a" /><text x="10" y="10.500" font-size="8" font-weight="700" text-anchor="middle" font-family="Inter, sans-serif" fill="#fff">PC</text><path d="M5 14h5v1H5z" fill="#fff" /></symbol>
      <symbol id="conda" viewBox="0 0 20 20"><circle cx="10" cy="10" r="8.700" fill="none" stroke="#2bb817" stroke-width="3" stroke-dasharray="5 .4" /></symbol>
      <symbol id="vscode" viewBox="0 0 20 20"><path fill="none" stroke="#1787cf" stroke-width="3" stroke-linejoin="round" d="M2 6.500l13 10M2 13.500L15 3.500" /><path d="M14 1l5 2.200v13.600L14 19z" fill="#2aa3ee" /></symbol>
      <symbol id="ghd" viewBox="0 0 20 20"><circle cx="10" cy="10" r="9.500" fill="#7a2f9b" stroke="#e9d9ee" /><path fill="#fff" d="M4.500 4l3 1.300a9 9 0 015 0L15.500 4l.4 3.300c1.300 3.700-.3 5.700-3.700 6v4.500H7.800v-1.500c-1.800.3-2.300-1-3-1.700 1.200 0 1.500 1.200 3 .7v-2c-3.400-.3-5-2.300-3.700-6z" /></symbol>

      <!-- minimised windows -->
      <symbol id="m-frame" viewBox="0 0 22 16"><path d="M.8.8h20.400v14.400H.8z" fill="#f3f3f3" stroke="#26292d" stroke-width="1.500" /><path d="M3 4h14M3 6h12M3 8h14M3 10h11M3 12h13" stroke="#bbb" stroke-width=".7" /></symbol>
      <symbol id="m-banner" viewBox="0 0 22 16"><path d="M0 5h22v7H0z" fill="#f2f2f5" /><path d="M0 5h22v4H0z" fill="#3d1676" /><path d="M3 7h7" stroke="#d9a93a" /></symbol>
      <symbol id="m-doc" viewBox="0 0 22 16"><path d="M0 0h22v16H0z" fill="#f4f4f2" /><path d="M0 0h22v2H0z" fill="#d8d8d8" /><path d="M2 4h5M9 4h10M2 7h5M9 7h9M2 10h5M9 10h10M9 13h7" stroke="#bbb" stroke-width=".8" /></symbol>
      <symbol id="m-few" viewBox="0 0 22 16"><path d="M0 0h22v16H0z" fill="#fdfdfd" /><path d="M0 0h22v1.500H0z" fill="#ddd" /><path d="M5 4h1.500M13 4h1.500M5 8h1.500" stroke="#5ab5e8" stroke-width="1.300" /></symbol>
      <symbol id="m-grid" viewBox="0 0 22 16"><path d="M0 0h22v16H0z" fill="#fafafa" /><path d="M0 0h22v1.500H0z" fill="#ddd" /><path d="M5 4h3M10 4h2M15 4h2M5 8h2M10 8h3M15 8h2M5 12h3M10 12h2" stroke="#b9c2c9" stroke-width="1.300" /></symbol>
      <symbol id="m-list" viewBox="0 0 22 16"><path d="M0 0h22v16H0z" fill="#fafafa" /><path d="M0 0h22v1.500H0z" fill="#ddd" /><path d="M2 3.500h2M6 3.500h5M14 3.500h4M2 6h2M6 6h6M14 6h4M2 8.500h2M6 8.500h5M6 11h4" stroke="#c8c8c8" stroke-width=".8" /></symbol>
      <symbol id="m-dots" viewBox="0 0 22 16"><path d="M0 0h22v16H0z" fill="#fafafa" /><path d="M3 4h16M3 8h16M3 12h12" stroke="#8abfe0" stroke-width="1.500" stroke-dasharray="1.500 2" /></symbol>
      <symbol id="m-photo" viewBox="0 0 22 16"><path d="M0 0h22v16H0z" fill="#eee" /><path d="M0 0h22v2H0z" fill="#d98a74" /><path d="M7 4h8v9H7z" fill="#9baa93" /></symbol>
      <symbol id="m-store" viewBox="0 0 22 16"><path d="M0 0h22v16H0z" fill="#f3f0f8" /><path d="M0 0h22v6H0z" fill="#6a42bd" /><path d="M2 8h3v6H2zM7 8h3v6H7z" fill="#d7829c" /><path d="M12 8h3v6h-3z" fill="#79a9d2" /></symbol>
      <symbol id="m-text" viewBox="0 0 22 16"><path d="M0 0h22v16H0z" fill="#fafcfd" /><path d="M4 4h12" stroke="#4aa3cf" stroke-width="1" /><path d="M2 8h10M2 11h7" stroke="#ddd" /></symbol>
      <symbol id="m-web" viewBox="0 0 22 16"><path d="M0 0h22v16H0z" fill="#fcfcfc" /><path d="M0 2h22v2H0z" fill="#24292e" /><path d="M0 4h22v2H0z" fill="#f5b9bf" /><path d="M4 8h10M4 11h7" stroke="#bbb" /></symbol>
      <symbol id="m-dark" viewBox="0 0 22 16"><path d="M0 0h22v16H0z" fill="#2c2f33" /><path d="M2 3h5M9 3h6M2 6h5M9 6h8M9 9h5M2 12h5" stroke="#4a555d" stroke-width=".9" /></symbol>
      <symbol id="m-slides" viewBox="0 0 22 16"><path d="M0 0h22v16H0z" fill="#f4f4f4" /><path d="M0 0h22v2H0z" fill="#d98a74" /><path d="M3 4.500h14" stroke="#37b6b3" stroke-width="2" /><path d="M3 10h8" stroke="#6ab04c" stroke-width="1.500" /></symbol>
      <symbol id="m-black" viewBox="0 0 22 16"><path d="M0 0h22v16H0z" fill="#f0f0f0" /><path d="M0 0h22v1.500H0z" fill="#2b579a" /><path d="M3 3.500h11v9H3z" fill="#181a1c" /></symbol>
      <symbol id="m-zoom" viewBox="0 0 22 16"><path d="M0 0h22v16H0z" fill="#fdfdfd" /><path d="M3 5h2.500v2.500H3z" fill="#f37327" /><path d="M7 5h2.500v2.500H7zM3 9.500h2.500V12H3zM7 9.500h2.500V12H7z" fill="#347bf5" /><path d="M12 3h8v3.500h-8z" fill="#2d4459" /></symbol>
      <symbol id="m-pic" viewBox="0 0 22 16"><path d="M0 2h22v12H0z" fill="#f8f8f8" /><circle cx="5.500" cy="8" r="2.500" fill="#8c4a2e" /><path d="M10 6h9M10 9h7" stroke="#ccc" /></symbol>
    </svg>

    <header class="menubar">
      <svg class="apple" viewBox="0 0 16 18"><path d="M11.300 0c.2 1.500-1.300 3.600-3.200 3.700C7.900 2 9.500.2 11.300 0zM14.800 6.200c-2.600 1.600-2.200 5 .6 6.200-.7 2-2.300 4.600-3.900 4.600-1.200 0-1.600-.8-3-.8s-1.900.8-3 .8C3.300 17 1 13 1 9.700 1 6.400 3.100 4.500 5.200 4.500c1.300 0 2.400.9 3.200.9.800 0 2.100-1 3.700-1 1.100 0 2.100.6 2.700 1.800z" /></svg>
      <nav class="menus"><span v-for="m in menus" :key="m">{{ m }}</span></nav>
      <div class="tray">
        <svg viewBox="0 0 16 16" width="16" height="16"><rect width="16" height="16" rx="4" /><rect x="2.500" y="4.500" width="7.500" height="7" rx="1.500" fill="#e9f0f8" /><path d="M10.600 7.400l3-2v5.200l-3-2z" fill="#e9f0f8" /></svg>
        <svg viewBox="0 0 20 16" width="18" height="14"><path d="M1 8h14c.8-1 .6-2.500.2-3.500 1.200.3 1.900 1.200 2 2 .8-.2 1.800 0 2.300.3-.4 1-1.500 1.700-3 1.700C15 13 12 15.500 7.500 15.500 3 15.500.800 12.500 1 8zM2.500 5.300h2.200v2.200H2.500zM5.200 5.300h2.200v2.200H5.200zM7.900 5.300h2.200v2.200H7.900zM10.600 5.300h2.200v2.200h-2.200zM5.200 2.700h2.200v2.200H5.200zM7.900 2.700h2.200v2.200H7.900zM10.600 2.700h2.200v2.200h-2.200zM10.600 0h2.200v2.200h-2.200z" /></svg>
        <svg viewBox="0 0 12 18" width="12" height="17"><path fill="none" stroke="#3b4046" stroke-width="1.100" d="M1.500 5l8.500 7.500L6 16.500v-15L10 5.500 1.500 13" /></svg>
        <svg viewBox="0 0 22 16" width="21" height="15"><g fill="none" stroke="#3b4046" stroke-width="1.900"><path d="M1.200 5.700c5.500-5.300 14.100-5.300 19.600 0M4.500 9c3.700-3.500 9.300-3.500 13 0M7.600 12c2-1.800 4.800-1.800 6.800 0" /></g><circle cx="11" cy="14.300" r="1.500" /></svg>
        <span class="pct">100%</span>
        <svg viewBox="0 0 24 12" width="24" height="12"><rect x=".6" y=".6" width="19.800" height="10.800" rx="2.500" fill="none" stroke="#3b4046" stroke-width="1.200" /><rect x="2" y="2" width="17" height="8" rx="1" /><path d="M12.500-.5L6 6.500h4L8 12.500l7-7h-4z" stroke="#e9f0f8" stroke-width="1.200" /><path d="M21.800 4v4c1.200-.5 1.200-3.500 0-4z" /></svg>
        <span class="clock">Tue 5:32 PM</span>
        <span class="user">Yamini</span>
        <svg viewBox="0 0 16 16" width="16" height="16"><circle cx="6.500" cy="6.500" r="5" fill="none" stroke="#3b4046" stroke-width="1.300" /><path stroke="#3b4046" stroke-width="1.600" d="M10.200 10.200l4.500 4.500" /></svg>
        <svg viewBox="0 0 20 20" width="17" height="17"><use href="#siri" /></svg>
        <svg viewBox="0 0 18 12" width="18" height="12"><path stroke="#3b4046" stroke-width="1.600" d="M0 1.500h2M4 1.500h12M0 6h2M4 6h14M0 10.500h2M4 10.500h12" /></svg>
      </div>
    </header>

    <div class="behind"><i></i></div>

    <main class="window">
      <div class="tabstrip">
        <div class="lights"><i class="r"></i><i class="y"></i><i class="g"></i></div>
        <div class="tabs">
          <span v-for="(t, i) in leftTabs" :key="i" class="tab"><svg width="16" height="16"><use :href="'#' + t" /></svg></span>
        </div>
        <div class="active"><svg width="10" height="10" viewBox="0 0 10 10"><path stroke="#3c4043" stroke-width="1.500" d="M1 1l8 8M9 1L1 9" /></svg></div>
        <div class="tabs after">
          <span v-for="(t, i) in rightTabs" :key="i" class="tab"><svg width="16" height="16"><use :href="'#' + t" /></svg></span>
        </div>
        <svg class="plus" width="12" height="12" viewBox="0 0 12 12"><path stroke="#3c4043" stroke-width="1.800" d="M6 0v12M0 6h12" /></svg>
      </div>

      <div class="toolbar">
        <svg width="16" height="16" viewBox="0 0 16 16"><path fill="none" stroke="#5b5f64" stroke-width="1.900" d="M15 8H2M8.300 1.500L1.800 8l6.500 6.500" /></svg>
        <svg width="16" height="16" viewBox="0 0 16 16"><path fill="none" stroke="#b9bbbe" stroke-width="1.900" d="M1 8h13M7.700 1.500L14.200 8l-6.500 6.500" /></svg>
        <svg width="16" height="16" viewBox="0 0 16 16"><path fill="none" stroke="#5b5f64" stroke-width="2" d="M13.300 4.500A6.300 6.300 0 1014 9.500" /><path fill="#5b5f64" d="M15 .8v6.500H8.500z" /></svg>
        <div class="omni">
          <svg width="10" height="13" viewBox="0 0 10 13"><rect y="4.500" x=".5" width="9" height="7.500" rx="1" fill="#5b5f64" /><path fill="none" stroke="#5b5f64" stroke-width="1.400" d="M2.500 5V3.200a2.500 2.500 0 015 0V5" /></svg>
          <span class="url"><b>github.com</b>/yaminireddyd/Web-MobileProgramming---2020Summer</span>
          <svg class="mag" width="15" height="15" viewBox="0 0 15 15"><g fill="none" stroke="#606468" stroke-width="1.500"><circle cx="6" cy="6" r="4.800" /><path d="M9.500 9.500l4.500 4.500M3.800 6h4.400" /></g></svg>
          <svg width="15" height="15" viewBox="0 0 16 16" class="mark"><path fill="none" stroke="#606468" stroke-width="1.500" d="M8 1.200l2 4.600 5 .5-3.800 3.300 1.200 4.900L8 11.900l-4.400 2.600 1.200-4.900L1 6.300l5-.5z" /></svg>
        </div>
        <div class="exts">
          <svg width="15" height="15" viewBox="0 0 15 15"><path fill="none" stroke="#4d5156" stroke-width="1.500" d="M2.500 12L6 5l2.500 5L12.500 3M9 3.500l3.800-1.200.7 3.700M1.500 8.500l.8 4L6 11.500" /></svg>
          <svg width="15" height="15" viewBox="0 0 15 15"><path d="M7.500.5l6.500 2c.2 6-2 10-6.500 12C3 12.500.8 8.500 1 2.500z" fill="#f5f5f5" stroke="#6a6d71" /><path d="M7.500 2.300l4.900 1.500c0 4.500-1.700 7.300-4.900 9-3.200-1.700-4.900-4.500-4.900-9z" fill="#6f7276" /><path d="M3 4.500c3 1 6.500 2 8 5.500M3.500 7.500c3 .5 4.500 1.500 5.500 4" fill="none" stroke="#f5f5f5" stroke-width="1.200" /></svg>
          <svg width="16" height="16" viewBox="0 0 16 16"><path d="M4 1h11v10l-3 4H4z" fill="#fff" stroke="#3b3d69" stroke-width="1.300" /><path d="M0 5h5v7H0z" fill="#fff" /><text x="10" y="10.500" font-size="7" font-weight="700" text-anchor="middle" font-family="Inter, sans-serif" fill="#3b3d69">pdf</text><path d="M0 6h4M1 9h3" stroke="#3b3d69" /></svg>
          <svg width="16" height="16" viewBox="0 0 16 16"><g fill="none" stroke="#f4525c" stroke-width="1.500"><circle cx="8" cy="8" r="7.200" /><path d="M8 8c-2.500-1-3-4.500-.5-6M8 8c2.200-1.800 5.500-.5 6 2.500M8 8c.5 2.800-2 5-5 4M3 5.500c3-2.500 7-1.500 8 1M13 4.500c1 3.500-1 6.500-4 6.500M9 14c-3.500-.8-5-4-3.500-6.500" /></g></svg>
          <i></i>
          <span class="face">y</span>
          <svg width="16" height="16" viewBox="0 0 16 16"><circle cx="8" cy="8" r="8" fill="#fb9b0a" /><path fill="#fff" d="M8 3.500l4.300 4.500H9.800v4H6.200V8H3.700z" /></svg>
        </div>
      </div>

      <div class="page">
        <div class="ghead">
          <svg class="logo" width="29" height="29"><use href="#gh" /></svg>
          <div class="search"><span>Search or jump to...</span><em>/</em></div>
          <b class="pr">Pull requests</b><b class="iss">Issues</b><b class="mk">M</b>
          <div class="gright">
            <svg width="14" height="14"><use href="#o-bell" /></svg>
            <svg class="add" width="11" height="11" viewBox="0 0 11 11"><path stroke="#fff" stroke-width="1.500" d="M5.500 0v11M0 5.500h11" /></svg><i class="caret"></i>
            <svg class="av" width="18" height="18"><use href="#identicon" /></svg><i class="caret"></i>
          </div>
        </div>

        <div class="flash">
          <div class="l1"><svg width="14" height="14"><use href="#o-alert" /></svg><span class="weak">The password you provided is weak</span><span class="pw">password. <b>After July 9, 2020 we will</b></span></div>
          <div class="l2"><b>automatically reset your password.</b> Ch</div>
          <div class="l3">Read our documentation on <a>safer password p</a></div>
        </div>

        <div class="repohead">
          <div class="titlerow">
            <svg width="15" height="15"><use href="#o-repo" /></svg>
            <h1><a class="owner">yaminireddyd</a><span>/</span><a class="name">Web-MobileProgramming---2020Summer</a></h1>
            <div class="social">
              <div class="pair"><span class="btn"><svg width="15" height="15"><use href="#o-eye" /></svg>Unwatch<i class="caret"></i></span><span class="num">1</span></div>
              <div class="pair"><span class="btn"><svg width="14" height="14"><use href="#o-star" /></svg>Star</span><span class="num">0</span></div>
              <div class="pair"><span class="btn off"><svg width="13" height="13"><use href="#o-fork" /></svg>Fork</span><span class="num">0</span></div>
            </div>
          </div>
          <nav class="tabsnav">
            <span v-for="n in navTabs" :key="n.id" :class="['nt', n.id]"><svg width="14" height="14"><use :href="'#' + n.icon" /></svg><u>{{ n.label }}</u><em v-if="n.count !== undefined">{{ n.count }}</em></span>
          </nav>
        </div>

        <div class="content">
          <div class="about">
            <div><p class="nodesc">No description, website, or topics provided.</p><a class="topics">Manage topics</a></div>
            <span class="btn edit">Edit</span>
          </div>
          <div class="summary">
            <span v-for="s in stats" :key="s.label"><svg width="14" height="14"><use :href="'#' + s.icon" /></svg><b>{{ s.n }}</b>{{ s.label }}</span>
          </div>
          <div class="actions">
            <span class="btn branchbtn"><small>Branch:</small>master<i class="caret"></i></span>
            <span class="btn newpr">New pull request</span>
            <div class="group"><span class="btn">Create new file</span><span class="btn">Upload files</span><span class="btn">Find file</span></div>
            <span class="btn clone">Clone or download<i class="caret"></i></span>
            <div class="pop">
              <h4>Launching GitHub Desktop...</h4>
              <p>If nothing happens, <a>download GitHub Desktop</a><br />and try again.</p>
              <a>Go back</a>
            </div>
          </div>
          <div class="files">
            <div class="tease"><svg width="18" height="18"><use href="#identicon" /></svg><b>yaminireddyd</b><span>Initial commit</span></div>
            <div class="row"><svg width="14" height="14"><use href="#o-file" /></svg><a>README.md</a><span>Initial commit</span></div>
          </div>
          <div class="readme">
            <div class="rhead"><svg width="14" height="14"><use href="#o-book" /></svg>README.md</div>
            <div class="rbody"><h2>Web-MobileProgramming---2020Summer</h2></div>
          </div>
          <hr />
        </div>
      </div>

      <footer class="shelf">
        <div v-for="(d, i) in downloads" :key="i" class="dl">
          <svg class="ic" width="14" height="17"><use :href="'#' + d.icon" /></svg>
          <div class="txt"><span>{{ d.name }}</span><small v-if="d.note">{{ d.note }}</small></div>
          <svg width="10" height="6" viewBox="0 0 10 6"><path fill="none" stroke="#75797d" stroke-width="1.600" d="M.6 5.400L5 1l4.400 4.400" /></svg>
        </div>
        <span class="showall">Show All</span>
        <svg class="close" width="10" height="10" viewBox="0 0 10 10"><path stroke="#6a6d71" stroke-width="1.600" d="M.5.500l9 9M9.500.500l-9 9" /></svg>
      </footer>
    </main>

    <div class="dialog">
      <h3>Open GitHub Desktop?</h3>
      <p>https://github.com wants to open this application.</p>
      <div class="dbtns"><span>Cancel</span><span class="alt">Open GitHub Desktop</span></div>
    </div>

    <div class="sharing">
      <i class="grip"></i>
      <span class="msgtext">meet.google.com is sharing your screen.</span>
      <span class="stop">Stop sharing</span>
      <span class="hide">Hide</span>
    </div>

    <div class="dock">
      <span v-for="a in apps" :key="a" class="app"><svg width="20" height="20"><use :href="'#' + a" /></svg><sup v-if="a === 'appstore'">2</sup><sup v-if="a === 'skype'">x</sup><i v-if="running.has(a)"></i></span>
      <span class="sep"></span>
      <span v-for="(m, i) in minis" :key="i" class="app mini"><svg width="21" height="15"><use :href="'#' + m.body" /></svg><svg v-if="m.badge" class="badge" width="8" height="8"><use :href="'#' + m.badge" /></svg></span>
      <span class="app"><svg width="20" height="20" viewBox="0 0 20 20"><path d="M2.500 1.500h15L15.500 19h-11z" fill="#dededc" /><ellipse cx="10" cy="2" rx="7.500" ry="1.200" fill="#f8f8f8" /><path d="M6.500 4l1 14M13.500 4l-1 14M10 4v14" stroke="#d0d0d0" /></svg></span>
    </div>
  </div>
</template>

<style>
html, body { margin: 0; overflow: hidden; }
</style>

<style scoped>
* { box-sizing: border-box; }
.desktop {
  position: relative; width: 1440px; height: 900px; overflow: hidden;
  font-family: Inter, "Liberation Sans", sans-serif; white-space: nowrap;
  background:
    linear-gradient(90deg, #7897b8, #86a2be 50%, #a6b5c6) 0 0 / 100% 60px no-repeat,
    repeating-linear-gradient(0deg, rgba(0, 0, 0, .16) 0 1px, transparent 1px 4px, rgba(255, 190, 90, .06) 4px 5px, transparent 5px 7px),
    linear-gradient(90deg, #38201a 0, #51312a 60px, #472b26 110px, #693d2a 180px, #a15417 255px, #81400f 285px, #49260c 420px, #5f3509 700px, #593509 1040px, #703806 1095px, #9a3b08 1125px, #833b08 1170px, #30220a 1225px, #3f2b0a 1270px, #76500e 1320px, #493409 1390px, #66470b 1440px);
}
.defs { position: absolute; }
svg { display: block; flex: none; }
.sprites { display: none; }
b, h1, h2, h3, h4 { font-weight: 600; }
h1, h2, h3, h4, p { margin: 0; }
a { color: #0359da; }
u { text-decoration: none; }
em, i { font-style: normal; }
.caret { width: 0; border: 3.500px solid transparent; border-top-color: currentColor; border-bottom: 0; }

.menubar { display: flex; align-items: center; height: 22px; padding-bottom: 1px; background: linear-gradient(90deg, #dce9f6, #e6f0f9 55%, #e9eff6); box-shadow: 0 1px 0 #617f9f; color: #30363d; }
.apple { width: 14px; height: 16px; margin-left: 20px; fill: #3b434b; }
.menus { display: grid; grid-template-columns: 73px 41px 44px 49px 65px 91px 63px 41px 70px 60px; margin-left: 20px; font-size: 14px; line-height: 16px; letter-spacing: -.15px; }
.menus span:first-child { font-weight: 700; letter-spacing: 0; }
.tray { display: grid; grid-template-columns: 27px 28px 29px 33px 34px 43px 98px 58px 33px 28px 18px; align-items: center; margin-left: 337px; font-size: 14px; line-height: 16px; letter-spacing: -.15px; fill: #3b4046; }
.tray .pct { font-size: 12px; letter-spacing: -.3px; }
.tray svg:nth-child(3) { margin-left: 4px; }

.behind { position: absolute; left: 286px; top: 800px; width: 770px; height: 58px; border-radius: 0 0 6px 6px; background: linear-gradient(#777, #777 44px, #a2a2a2); }
.behind i { display: block; width: 1px; height: 58px; margin-left: 132px; background: #808080; }
.window { position: absolute; left: 0; top: 30px; width: 1439px; height: 813px; border-radius: 6px 6px 6px 6px; overflow: hidden; background: #fff; box-shadow: 0 0 0 1px rgba(70, 90, 110, .5), 0 3px 8px rgba(0, 0, 0, .45); }
.tabstrip { display: flex; height: 42px; background: #dee1e8; }
.lights { display: flex; gap: 8px; width: 79px; padding: 15px 0 0 13px; }
.lights i { width: 12px; height: 12px; border-radius: 50%; }
.r { background: #ff4a42; border: 1px solid #e23c36; } .y { background: #ffbe03; border: 1px solid #e0a404; } .g { background: #0bcd2d; border: 1px solid #0ab324; }
.tabs { display: flex; padding-top: 15px; }
.tab { display: flex; justify-content: center; align-items: center; width: 26px; height: 20px; border-right: 1px solid #858990; fill: #24292e; }
.tabs:not(.after) .tab:last-child { border-right-color: transparent; width: 25px; }
.active { position: relative; display: flex; align-items: center; justify-content: center; width: 32px; height: 34px; margin-top: 8px; border-radius: 8px 8px 0 0; background: #fff; }
.active::before, .active::after { content: ""; position: absolute; bottom: 0; width: 8px; height: 8px; }
.active::before { left: -8px; background: radial-gradient(circle at 0 0, transparent 7.500px, #fff 8px); }
.active::after { right: -8px; background: radial-gradient(circle at 100% 0, transparent 7.500px, #fff 8px); }
.after .tab { width: 25px; }
.after { margin-left: 1px; }
.plus { margin: 19px 0 0 16px; }

.toolbar { display: flex; align-items: center; height: 37px; padding: 0 0 0 14px; gap: 16px; border-bottom: 1px solid #d8dadd; }
.omni { display: flex; align-items: center; width: 1114px; height: 28px; margin-left: -2px; padding-left: 13px; border-radius: 14px; background: #f1f3f4; color: #5f6368; flex: none; }
.url { margin: -2px 0 0 11px; font-size: 14px; letter-spacing: -.19px; }
.url b { font-weight: 400; color: #202124; }
.mag { margin-left: auto; }
.mark { margin: 0 10px 0 17px; }
.exts { display: flex; align-items: center; gap: 17px; margin-left: -1px; }
.exts svg:nth-child(3) { margin-left: -1px; }
.exts i { width: 1px; height: 16px; background: #cdd0d4; margin: 0 -5px 0 -4px; }
.face { width: 22px; height: 22px; border-radius: 50%; background: #5b05a8; color: #fff; font-size: 12px; line-height: 20px; text-align: center; margin-right: -4px; }

.page { height: 685px; color: #24292e; font-size: 12.600px; }
.ghead { display: flex; align-items: center; height: 46px; padding-left: 14px; background: #24292e; color: #fff; fill: #fff; }
.search { display: flex; align-items: center; justify-content: space-between; width: 270px; height: 25px; margin: 0 14px 0 15px; padding: 0 8px 2px 6px; border-radius: 3px; background: #404448; color: #9b9fa3; letter-spacing: -.06px; flex: none; }
.search em { width: 17px; height: 18px; margin-top: 2px; border: 1px solid #63676b; border-radius: 3px; color: #7f8387; font-size: 11px; line-height: 16px; text-align: center; }
.pr { width: 95px; } .iss { width: 54px; }
.ghead > b { font-weight: 700; font-size: 12.600px; margin-top: -2px; }
.gright { display: flex; align-items: center; margin-left: auto; padding-right: 15px; }
.gright .add { margin: 0 5.500px 0 16px; } .gright .av { margin: 0 3px 0 14.500px; }

.flash { height: 92px; padding: 14px 264px 0; background: #ffdce0; border: solid #d8bdc2; border-width: 1px 0; color: #86000f; line-height: 18px; letter-spacing: .03px; }
.l1 { display: flex; align-items: center; }
.weak { margin-left: 4px; letter-spacing: -.03px; }
.pw { margin-left: auto; margin-right: 11px; }
.l2 b { letter-spacing: .07px; }
.l3 { margin-top: 9px; font-size: 10.800px; letter-spacing: .08px; }

.repohead { height: 96px; padding: 14px 278px 0; background: #fafbfc; border-bottom: 1px solid #e1e4e8; }
.titlerow { display: flex; align-items: center; height: 25px; color: #959da5; fill: #959da5; }
.titlerow h1 { display: flex; gap: 4px; margin: -2px 0 0 7px; font-size: 16.200px; font-weight: 400; color: #586069; }
.titlerow .owner { letter-spacing: -.42px; }
.titlerow .name { font-weight: 600; letter-spacing: -.19px; }
.social { display: flex; gap: 9px; margin-left: auto; }
.pair { display: flex; }
.btn, .num { display: inline-flex; align-items: center; justify-content: center; height: 25px; border: 1px solid #c5c9cd; border-radius: 3px; background: linear-gradient(#fafbfc, #eff3f6 90%); color: #24292e; fill: #24292e; font-size: 10.800px; font-weight: 600; letter-spacing: .1px; }
.num { width: 26px; background: #fff; border-radius: 0 3px 3px 0; border-left: 0; }
.pair .btn { border-radius: 3px 0 0 3px; gap: 3px; letter-spacing: .02px; }
.pair:nth-child(1) .btn { width: 95px; }
.pair:nth-child(1) .num { width: 25px; }
.pair:nth-child(2) .btn { width: 60px; }
.pair:nth-child(3) .btn { width: 61px; gap: 4px; letter-spacing: .2px; font-weight: 500; }
.pair:nth-child(3) .num { width: 27px; }
.btn.off { color: #9da3a9; fill: #9da3a9; background: #eff3f6; }
.tabsnav { display: grid; grid-template-columns: 85px 97px 136px 85px 108px 67px 108px 87px 80px; height: 35px; margin-top: 22px; }
.nt { display: flex; align-items: center; gap: 4px; height: 35px; color: #586069; }
.nt svg { color: #b0b6bb; fill: #b0b6bb; }
.nt.insights svg, .nt.settings svg { margin-right: -1px; }
.nt.security svg { margin-right: -1px; }
.nt.code { width: 73px; height: 35px; padding: 0 0 3px 11px; border: 1px solid #e1e4e8; border-top: 3px solid #f9540a; border-bottom: 0; border-radius: 3px 3px 0 0; background: #fff; color: #24292e; }
.nt.code svg { color: #24292e; fill: #24292e; }
.nt em { width: 14px; height: 14px; border-radius: 7px; background: #e7eaed; color: #444d56; font-size: 10.800px; font-weight: 600; line-height: 14px; text-align: center; }

.content { padding: 0 278px; }
.about { display: flex; justify-content: space-between; height: 81px; padding-top: 22px; }
.nodesc { margin: 1px 0 0 1px; font-size: 14.400px; line-height: 20px; font-style: italic; letter-spacing: -.18px; color: #586069; }
.topics { display: block; margin: 10px 0 0 1px; font-size: 10.800px; line-height: 14px; }
.edit { width: 41px; }
.summary { display: grid; grid-template-columns: repeat(5, 1fr); height: 38px; border: 1px solid #dfe2e5; border-radius: 3px; color: #586069; fill: #6a737d; }
.summary span { display: flex; align-items: center; justify-content: center; gap: 3.500px; padding-bottom: 2px; }
.summary b { color: #24292e; }
.summary svg { color: #6a737d; }
.actions { position: relative; display: flex; height: 25px; margin-top: 15px; }
.branchbtn { width: 112px; gap: 3px; } .branchbtn small { font-size: 10.800px; font-weight: 400; color: #586069; }
.newpr { width: 111px; margin-left: 7px; }
.group { display: flex; margin-left: auto; }
.group .btn { width: 100px; border-radius: 3px 0 0 3px; }
.group .btn + .btn { width: 84px; border-left: 0; border-radius: 0; }
.group .btn + .btn + .btn { width: 62px; border-radius: 0 3px 3px 0; }
.clone { width: 131px; margin-left: 7px; gap: 3px; background: #02a434; border-color: #10752b; color: #fff; font-weight: 700; }
.pop { position: absolute; z-index: 2; left: 566px; top: 32px; width: 317px; height: 125px; padding: 0 14px; border: 1px solid #c2c6cb; border-radius: 4px; background: #fff; box-shadow: 0 3px 12px rgba(27, 31, 35, .15); line-height: 18px; letter-spacing: -.04px; color: #586069; }
.pop::before { content: ""; position: absolute; right: 8px; top: -7px; border: 7px solid transparent; border-top: 0; border-bottom-color: #fff; }
.pop h4 { margin-top: 9px; font-size: 14.400px; line-height: 22px; font-weight: 500; letter-spacing: .07px; color: #24292e; }
.pop p { margin: 12px 0 9px; }
.files { margin-top: 7px; border: 1px solid #d1d5da; border-radius: 3px 3px 2px 2px; height: 68px; }
.tease { display: flex; align-items: center; height: 35px; margin: -1px -1px 0; padding-left: 15px; background: #f1f8ff; border: 1px solid #c0d8ee; border-radius: 3px 3px 0 0; font-size: 10.800px; letter-spacing: .06px; color: #586069; }
.tease b { margin: 1px 4px 0 5px; color: #24292e; }
.tease span { margin-top: 1px; }
.row { display: flex; align-items: center; height: 31px; padding: 0 0 1px 15px; color: #586069; }
.row svg { color: #7388a2; } .row a { width: 353px; margin-left: 6px; letter-spacing: -.08px; }
.readme { height: 135px; margin-top: 14px; border: 1px solid #d1d5da; border-radius: 3px; }
.rhead { display: flex; align-items: center; gap: 4px; height: 32px; margin: -1px -1px 0; padding-left: 15px; background: #f6f8fa; border: 1px solid #d1d5da; border-radius: 3px 3px 0 0; font-weight: 600; }
.rbody { padding: 27px 29px 0 30px; }
.rbody h2 { height: 46px; line-height: 40px; font-size: 28.800px; letter-spacing: -.96px; border-bottom: 1px solid #eaecef; }
hr { margin: 36px 0 0; border: 0; border-top: 1px solid #e1e4e8; }

.shelf { display: flex; align-items: center; height: 49px; border-top: 1px solid #d8dadd; background: linear-gradient(#fff, #fafafa); }
.dl { display: flex; align-items: center; width: 227px; height: 36px; padding: 0 17px 0 21px; border-right: 1px solid #cdd0d3; }
.dl:first-child { width: 230px; }
.dl .ic { margin-top: -2px; }
.dl:nth-child(2) .ic, .dl:nth-child(3) .ic, .dl:nth-child(4) .ic { margin-left: -3px; }
.dl:nth-child(5) .ic { width: 16px; margin-left: -5px; }
.txt { flex: 1; margin: 2px 0 0 14px; font-size: 12.500px; line-height: 15px; letter-spacing: -.24px; color: #3c4043; }
.dl:nth-child(2) .txt, .dl:nth-child(3) .txt, .dl:nth-child(4) .txt { letter-spacing: -.06px; }
.txt small { display: block; font-size: 11px; line-height: 12px; letter-spacing: 0; color: #6a6d71; }
.dl:nth-child(5) .txt { letter-spacing: -.27px; }
.showall { display: flex; align-items: center; justify-content: center; width: 82px; height: 32px; margin: -2px 0 0 auto; padding-bottom: 1px; border: 1px solid #d5d8dc; border-radius: 4px; font-size: 12.500px; letter-spacing: -.2px; color: #3c4043; font-weight: 500; }
.close { margin: -1px 13px 0; }

.dialog { position: absolute; z-index: 5; left: 495px; top: 105px; width: 448px; height: 154px; padding: 17px 16px; border-radius: 3px; background: #fff; box-shadow: 0 0 1px rgba(0, 0, 0, .5), 0 3px 10px rgba(0, 0, 0, .45); color: #202124; }
.dialog h3 { font-size: 15px; font-weight: 400; line-height: 20px; letter-spacing: -.21px; }
.dialog p { margin: 18px 0 0 16px; font-size: 13px; line-height: 18px; letter-spacing: -.07px; color: #5f6368; }
.dbtns { display: flex; justify-content: flex-end; gap: 8px; margin-top: 33px; }
.dbtns span { display: flex; align-items: center; justify-content: center; width: 72px; height: 32px; padding-bottom: 2px; border: 1px solid #d5d8dc; border-radius: 4px; font-size: 12.500px; font-weight: 500; letter-spacing: -.14px; color: #125ce6; }
.dbtns .alt { width: 159px; background: #fafafb; }

.sharing { position: absolute; z-index: 6; left: 511px; top: 819px; width: 419px; height: 42px; display: flex; align-items: center; background: rgba(252, 252, 252, .97); box-shadow: 0 0 1px rgba(0, 0, 0, .6), 0 2px 6px rgba(0, 0, 0, .5); font-size: 12.500px; color: #2b2d30; }
.grip { width: 6px; height: 11px; margin-left: 10px; border: solid #bcbcbc; border-width: 0 2px; }
.msgtext { width: 240px; margin-left: 10px; letter-spacing: -.22px; }
.stop { width: 106px; height: 32px; line-height: 32px; border-radius: 4px; background: #1668ec; color: #fff; text-align: center; font-weight: 600; letter-spacing: -.22px; }
.hide { margin-left: 10px; color: #1a62e0; }

.dock { position: absolute; left: 15px; top: 867px; width: 1410px; height: 33px; padding-left: 2.800px; display: flex; border-radius: 5px 5px 0 0; background: linear-gradient(90deg, #806a62, #a27260 110px, #c87f63 210px, #e08968 300px, #dc8360 400px, #b66b49 460px, #a5684a 500px, #cb722f 560px, #e87a18 660px, #ed870f 850px, #ef980b 980px, #ef920f 1120px, #ed8b13 1240px, #b87824 1310px, #be7920 1350px, #ec8415 1400px); }
.app { position: relative; display: flex; justify-content: center; width: 23.630px; height: 33px; padding-top: 5px; flex: none; }
.app i { position: absolute; left: 10.500px; bottom: 2px; width: 3px; height: 3px; border-radius: 50%; background: #401313; }
.app sup { position: absolute; right: 0; top: 4px; width: 8px; height: 8px; border-radius: 50%; background: #f22323; color: #fff; font-size: 6px; line-height: 8px; text-align: center; }
.sep { width: 6.400px; border-left: 1px solid rgba(110, 60, 10, .55); margin: 5px 0 5px 5px; flex: none; }
.mini { padding-top: 9px; }
.badge { position: absolute; right: 1px; bottom: 8px; }
</style>
